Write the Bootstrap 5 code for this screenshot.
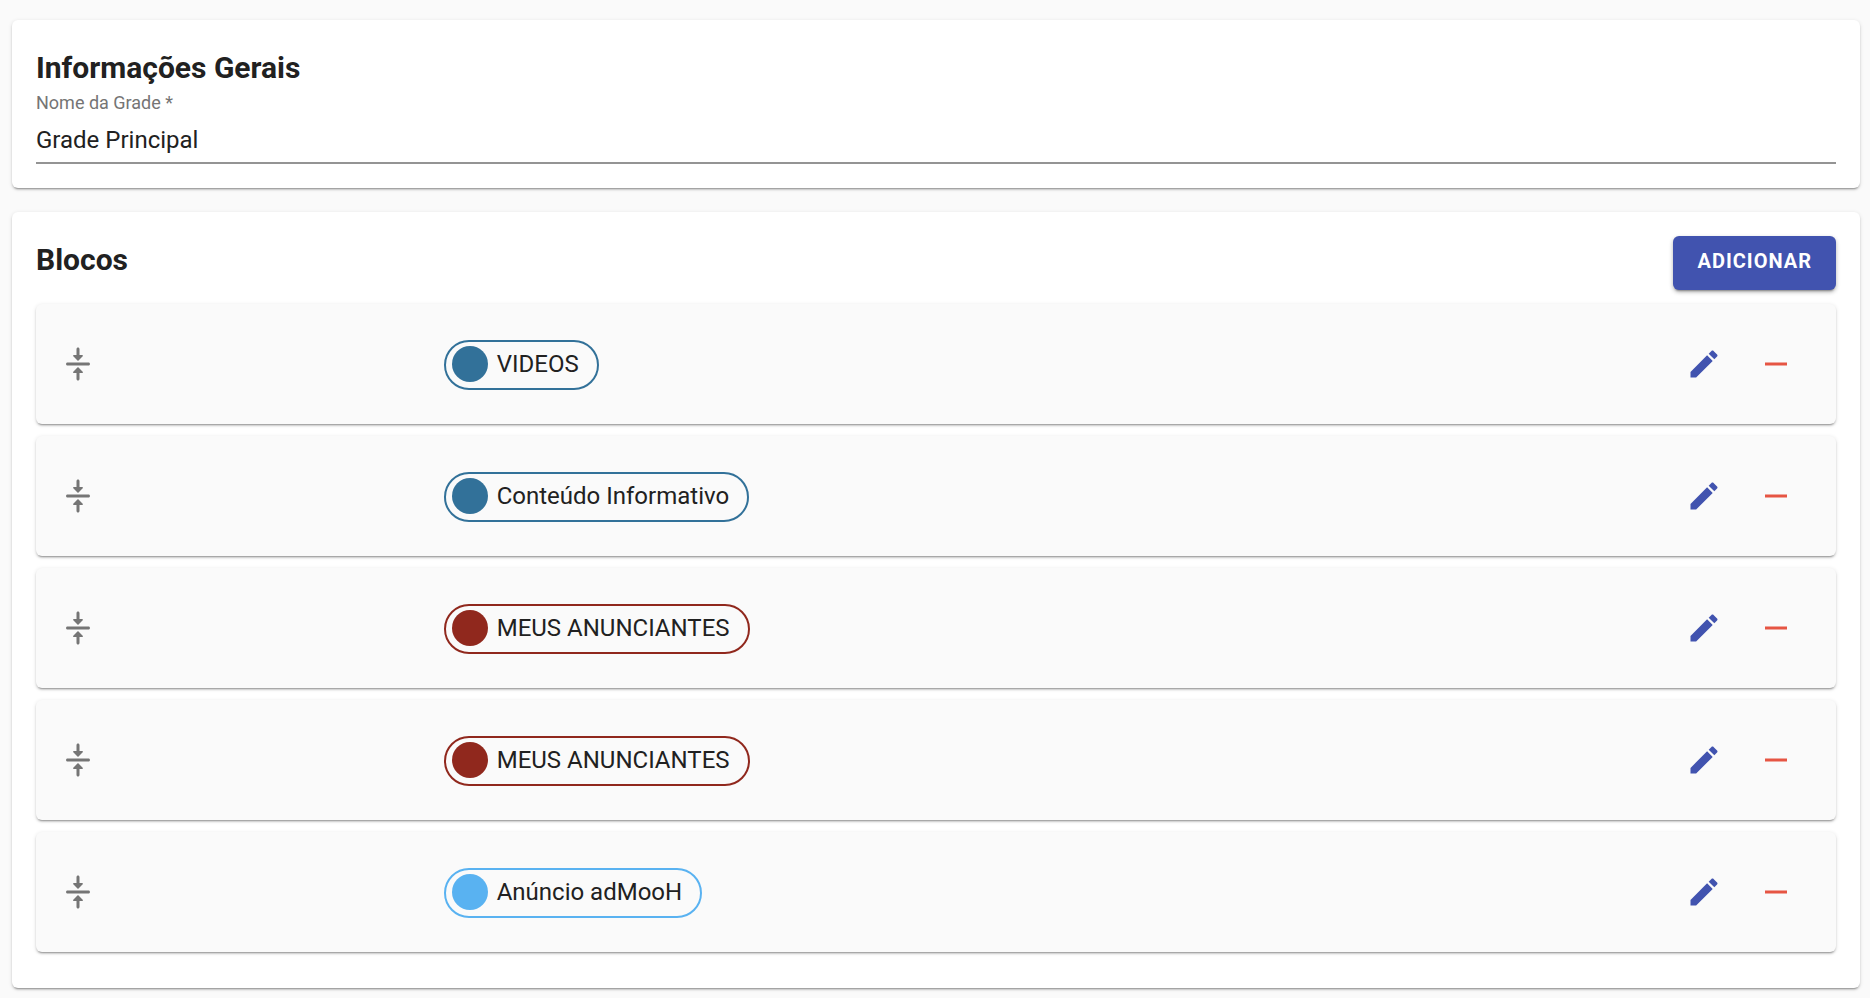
<!DOCTYPE html>
<html lang="pt-BR">
<head>
<meta charset="utf-8">
<meta name="viewport" content="width=device-width, initial-scale=1">
<title>Grade Principal</title>
<link href="https://cdn.jsdelivr.net/npm/bootstrap@5.3.0/dist/css/bootstrap.min.css" rel="stylesheet">
<style>
  body { font-family: Roboto, "Liberation Sans", sans-serif; background: #fafafa; color: #212121; }
  .page { padding: 20px 10px 10px 12px; gap: 24px; }
  .panel { background: #fff; padding: 24px; }
  .panel, .block-item {
    border-radius: 6px;
    box-shadow: 0 3px 1px -2px rgba(0,0,0,.2), 0 2px 2px 0 rgba(0,0,0,.14), 0 1px 4px 0 rgba(0,0,0,.12);
  }
  .panel-title { font-size: 30px; font-weight: 700; line-height: 48px; }
  .field-label { font-size: 18px; line-height: 22px; color: #757575; }
  .field-input { height: 50px; font-size: 24px; color: inherit; border-bottom: 2px solid #949494 !important; background: transparent; }
  .field-input:focus { box-shadow: none; background: transparent; }
  .panel-head { height: 68px; }
  .btn-add {
    background: #4153af; color: #fff; font-size: 20px; font-weight: 700; line-height: 50px;
    letter-spacing: 1px; padding: 0 24px 4px; border-radius: 6px;
    box-shadow: 0 3px 2px -2px rgba(0,0,0,.3), 0 2px 4px rgba(0,0,0,.3);
  }
  .btn-add:hover { background: #37479b; color: #fff; }
  .block-list { gap: 12px; margin-bottom: 12px; }
  .block-item { background: #fafafa; height: 120px; padding: 0 24px; }
  .handle { width: 21.9%; color: #757575; }
  .chip {
    --tone: #327199; height: 50px; gap: 9px; padding: 0 18px 2px 6px;
    border: 2px solid var(--tone); border-radius: 25px; font-size: 24px; margin-top: 2px;
  }
  .chip-dot { width: 36px; height: 36px; border-radius: 50%; background: var(--tone); }
  .tone-red { --tone: #90281d; }
  .tone-sky { --tone: #59b2f1; }
  .icon { width: 36px; height: 36px; fill: currentColor; display: block; }
  .tools { gap: 12px; margin-right: 6px; }
  .btn-tool { width: 60px; height: 60px; padding: 12px; border: 0; }
  .tool-edit, .tool-edit:hover { color: #4153af; }
  .tool-remove, .tool-remove:hover { color: #e65543; }
</style>
</head>
<body>
<svg class="d-none" aria-hidden="true">
  <symbol id="i-handle" viewBox="0 0 24 24"><path d="M9.21 18H11v4c0 .55.45 1 1 1s1-.45 1-1v-4h1.79c.45 0 .67-.54.35-.85l-2.79-2.79c-.2-.2-.51-.2-.71 0l-2.79 2.79c-.31.31-.09.85.36.85zm5.58-12H13V2c0-.55-.45-1-1-1s-1 .45-1 1v4H9.21c-.45 0-.67.54-.35.85l2.79 2.79c.2.2.51.2.71 0l2.79-2.79c.31-.31.09-.85-.36-.85zM4 12c0 .55.45 1 1 1h14c.55 0 1-.45 1-1s-.45-1-1-1H5c-.55 0-1 .45-1 1z"/></symbol>
  <symbol id="i-edit" viewBox="0 0 24 24"><path d="M3 17.25V21h3.75L17.81 9.94l-3.75-3.75L3 17.25zM20.71 7.04c.39-.39.39-1.02 0-1.41l-2.34-2.34c-.39-.39-1.02-.39-1.41 0l-1.83 1.83 3.75 3.75 1.83-1.83z"/></symbol>
  <symbol id="i-minus" viewBox="0 0 36 36"><path d="M7 16.5h22v3H7z"/></symbol>
</svg>

<main class="page d-flex flex-column">
  <section class="panel">
    <h2 class="panel-title mb-0">Informações Gerais</h2>
    <label for="nome" class="field-label d-block">Nome da Grade *</label>
    <input id="nome" type="text" class="field-input form-control border-0 rounded-0 px-0 pt-1 pb-0" value="Grade Principal" required>
  </section>

  <section class="panel">
    <div class="panel-head d-flex justify-content-between align-items-start">
      <h2 class="panel-title mb-0">Blocos</h2>
      <button type="button" class="btn btn-add border-0">ADICIONAR</button>
    </div>
    <ul class="block-list list-unstyled d-flex flex-column">
      <li class="block-item d-flex align-items-center">
        <div class="handle"><svg class="icon"><use href="#i-handle"/></svg></div>
        <span class="chip d-flex align-items-center"><span class="chip-dot"></span>VIDEOS</span>
        <div class="tools d-flex ms-auto">
          <button type="button" class="btn btn-tool tool-edit" aria-label="Editar"><svg class="icon"><use href="#i-edit"/></svg></button>
          <button type="button" class="btn btn-tool tool-remove" aria-label="Remover"><svg class="icon"><use href="#i-minus"/></svg></button>
        </div>
      </li>
      <li class="block-item d-flex align-items-center">
        <div class="handle"><svg class="icon"><use href="#i-handle"/></svg></div>
        <span class="chip d-flex align-items-center"><span class="chip-dot"></span>Conteúdo Informativo</span>
        <div class="tools d-flex ms-auto">
          <button type="button" class="btn btn-tool tool-edit" aria-label="Editar"><svg class="icon"><use href="#i-edit"/></svg></button>
          <button type="button" class="btn btn-tool tool-remove" aria-label="Remover"><svg class="icon"><use href="#i-minus"/></svg></button>
        </div>
      </li>
      <li class="block-item d-flex align-items-center">
        <div class="handle"><svg class="icon"><use href="#i-handle"/></svg></div>
        <span class="chip tone-red d-flex align-items-center"><span class="chip-dot"></span>MEUS ANUNCIANTES</span>
        <div class="tools d-flex ms-auto">
          <button type="button" class="btn btn-tool tool-edit" aria-label="Editar"><svg class="icon"><use href="#i-edit"/></svg></button>
          <button type="button" class="btn btn-tool tool-remove" aria-label="Remover"><svg class="icon"><use href="#i-minus"/></svg></button>
        </div>
      </li>
      <li class="block-item d-flex align-items-center">
        <div class="handle"><svg class="icon"><use href="#i-handle"/></svg></div>
        <span class="chip tone-red d-flex align-items-center"><span class="chip-dot"></span>MEUS ANUNCIANTES</span>
        <div class="tools d-flex ms-auto">
          <button type="button" class="btn btn-tool tool-edit" aria-label="Editar"><svg class="icon"><use href="#i-edit"/></svg></button>
          <button type="button" class="btn btn-tool tool-remove" aria-label="Remover"><svg class="icon"><use href="#i-minus"/></svg></button>
        </div>
      </li>
      <li class="block-item d-flex align-items-center">
        <div class="handle"><svg class="icon"><use href="#i-handle"/></svg></div>
        <span class="chip tone-sky d-flex align-items-center"><span class="chip-dot"></span>Anúncio adMooH</span>
        <div class="tools d-flex ms-auto">
          <button type="button" class="btn btn-tool tool-edit" aria-label="Editar"><svg class="icon"><use href="#i-edit"/></svg></button>
          <button type="button" class="btn btn-tool tool-remove" aria-label="Remover"><svg class="icon"><use href="#i-minus"/></svg></button>
        </div>
      </li>
    </ul>
  </section>
</main>
<script src="https://cdn.jsdelivr.net/npm/bootstrap@5.3.0/dist/js/bootstrap.bundle.min.js"></script>
</body>
</html>
